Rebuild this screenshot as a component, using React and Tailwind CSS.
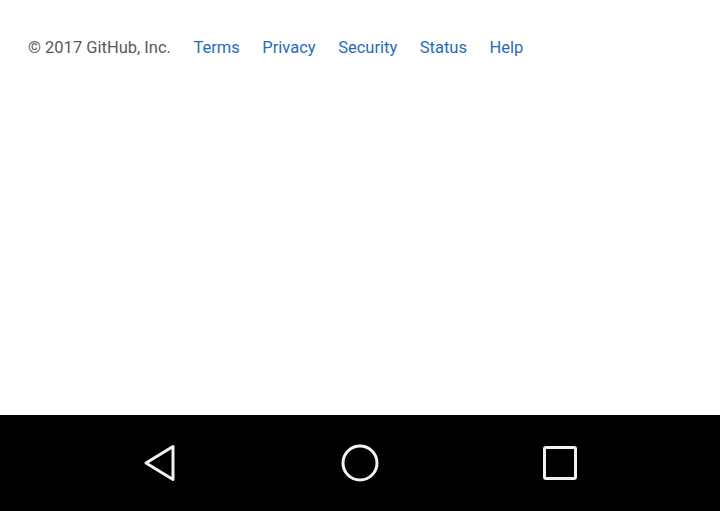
export default function App() {
  const links = ["Terms", "Privacy", "Security", "Status", "Help"];
  return (
    <div className="flex h-[511px] w-[720px] flex-col bg-white" style={{ fontFamily: "Roboto, 'Noto Sans', sans-serif" }}>
      <div className="flex-1">
        <div className="flex items-center gap-[22.5px] px-[28px] pt-[38px] text-[16.5px] leading-[20px]">
          <span className="text-[#595959]">© 2017 GitHub, Inc.</span>
          {links.map((l) => (
            <a key={l} href="#" className="text-[#1e6cc0]">
              {l}
            </a>
          ))}
        </div>
      </div>
      <nav className="flex h-[96px] items-center justify-between bg-black px-[142px]">
        <svg width="36" height="40" viewBox="0 0 36 40" className="text-[#f2f2f2]">
          <path d="M31 3.5 L4 20 L31 36.5 Z" fill="none" stroke="currentColor" strokeWidth="3" strokeLinejoin="round" />
        </svg>
        <svg width="40" height="40" viewBox="0 0 40 40" className="text-[#f2f2f2]">
          <circle cx="20" cy="20" r="17" fill="none" stroke="currentColor" strokeWidth="3" />
        </svg>
        <svg width="36" height="36" viewBox="0 0 36 36" className="text-[#f2f2f2]">
          <rect x="2.5" y="2.5" width="31" height="31" rx="1.5" fill="none" stroke="currentColor" strokeWidth="3" />
        </svg>
      </nav>
    </div>
  );
}
